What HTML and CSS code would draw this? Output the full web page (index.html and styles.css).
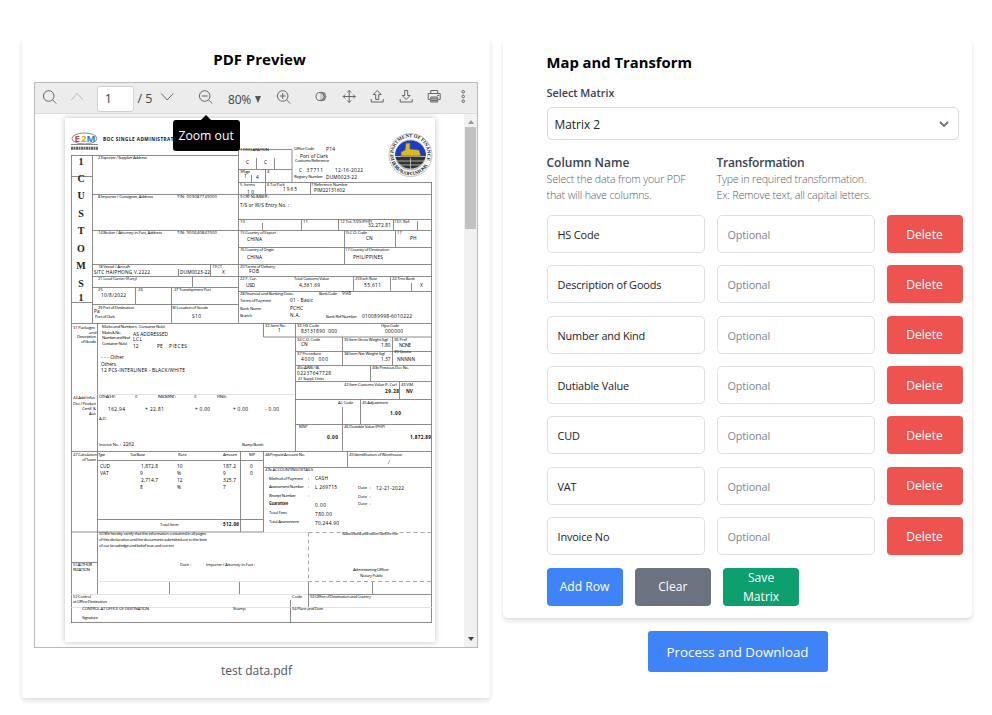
FILE: index.html
```html
<!DOCTYPE html>
<html lang="en">
<head>
<meta charset="utf-8">
<title>PDF Mapping</title>
<link rel="stylesheet" href="styles.css">
</head>
<body>
<main class="layout">
<section class="card preview">
<h2 class="preview-title">PDF Preview</h2>
<div class="viewer">
<div class="toolbar">
<svg class="ico" viewBox="0 0 28 30"><circle cx="13.5" cy="13" r="5.3"/><path d="M17.5 17l3.500 3.500"/></svg>
<svg class="ico muted" viewBox="0 0 28 30"><path d="M8 17l6-6.500 6 6.500"/></svg>
<span class="page-input">1</span>
<span class="page-total">/ 5</span>
<svg class="ico" viewBox="0 0 28 30"><path d="M8 10.500l6 6.500 6-6.500"/></svg>
<span class="zoom-out">
<svg class="ico" viewBox="0 0 28 30"><circle cx="13.500" cy="13" r="5.300"/><path d="M17.500 17l3.500 3.500M10.500 13h6"/></svg>
<span class="tip">Zoom out</span>
</span>
<span class="zoom">80%<i class="tri"></i></span>
<svg class="ico zoom-in" viewBox="0 0 28 30"><circle cx="13.500" cy="13" r="5.300"/><path d="M17.500 17l3.500 3.500M10.500 13h6M13.500 10v6"/></svg>
<svg class="ico theme" viewBox="0 0 28 30"><path d="M14 9l1.500.8 2 .2.300 2 1 1.500-1 1.500-.3 2-2 .2-1.500.8z" fill="#aaa"/><circle cx="12.800" cy="13.500" r="4"/><path d="M13 9.500a4 4 0 0 1 0 8" fill="#ccc"/></svg>
<svg class="ico" viewBox="0 0 28 30"><path d="M14 7.500v12M8 13.500h12M12 9.500l2-2 2 2M12 17.500l2 2 2-2M10 11.500l-2 2 2 2M18 11.500l2 2-2 2"/></svg>
<svg class="ico" viewBox="0 0 28 30"><path d="M8 16v3h12v-3M12.500 16.500v-5h-2.500l4-4 4 4h-2.500v5z"/></svg>
<svg class="ico" viewBox="0 0 28 30"><path d="M8 16v3h12v-3M12.500 7.500v5h-2.500l4 4 4-4h-2.500v-5z"/></svg>
<svg class="ico" viewBox="0 0 28 30"><path d="M10.500 10.500v-3h7v3M10 16.500H8v-6h12v6h-2"/><path d="M10.500 14h7v5h-7zM11 15.800h6M11 17.500h6M17 12.500h2" fill="#ccc"/></svg>
<svg class="ico" viewBox="0 0 28 30"><circle cx="14" cy="8.800" r="1.300"/><circle cx="14" cy="13.500" r="1.300"/><circle cx="14" cy="18.200" r="1.300"/></svg>
</div>
<div class="stage">
<div class="sheet">
<svg class="doc" viewBox="65 118 370 524">
<g class="rules">
<path d="M71.500 155V623M92.500 155V323M238.500 149V323M431.500 182V623M97.500 323V594M71 155.500H238M71 176.500H92M92 194.500H432M92 230.500H238M238 149.500H292V182M256.500 158V169M274.500 158V169M238 169.500H292M265.500 169V194M238 182.500H432M251.500 175V182M310.500 182V194M238 219.500H432M262.500 223V230M301.500 219V230M338.500 219V230M393.500 219V230M417.500 221V230M238 230.500H432M344.500 230V264M395.500 230V247M238 247.500H432M92 264.500H432M92 276.500H432M92 287.500H238M238 291.500H432M92 304.500H238M71 302.500H92M71 323.500H432M178.500 269V276M210.500 264V276M192.500 276V287M135.500 287V304M171.500 287V323M353.500 276V291M390.500 276V291M411.500 283V291M263.500 323V337H432M295.500 323V451M295 351.500H432M295 365.500H432M342.500 337V365M392.500 337V365M370.500 365V381M295 381.500H432M399.500 381V399M295 399.500H432M360.500 399V424M342.500 407V451M295 424.500H432M71 451.500H432M97 460.500H263M240.500 451V532M263.500 451V532H71M347.500 451V467M263 467.500H432M97 519.500H263M71 562.500H97M169.500 582V594M239.500 582V594M308.500 582V607M372.500 582V594M308 594.500H432M290.500 600V623M71 622.500H432"/>
<path class="faint" d="M97 394.500H295M263 532.500H308M97 581.500H308M71 594.500H308M71 607.500H432"/>
<path class="dash" d="M308.500 532.500H432M308.500 532.500V582M308 581.500H432"/>
</g>
<g class="side"><text x="81" y="165">1</text><text x="81" y="182">C</text><text x="81" y="199">U</text><text x="81" y="216.500">S</text><text x="81" y="234">T</text><text x="81" y="251.500">O</text><text x="81" y="269">M</text><text x="81" y="287">S</text><text x="81" y="301">1</text></g>
<text class="b" x="103" y="141" textLength="79">BOC SINGLE ADMINISTRATIVE</text>
<g class="s">
<text x="98" y="158.500" textLength="49">2 Exporter / Supplier Address</text>
<text x="98" y="198" textLength="55">8 Importer / Consignee, Address</text><text x="177" y="198" textLength="40">TIN: 009087749000</text>
<text x="98" y="234" textLength="64">14 Broker / Attorney-in-Fact, Address</text><text x="177" y="234" textLength="40">TIN: 900640847000</text>
<text x="240" y="151" textLength="29">1 DECLARATION</text><text x="294" y="150" textLength="20">Office Code</text><text x="295" y="162" textLength="34">Customs Reference</text><text x="294" y="178" textLength="29">Registry Number</text>
<text x="240" y="173" textLength="10">3 Page</text><text x="267" y="173">4</text><text x="240" y="185.500" textLength="15">5 Items</text><text x="267" y="185.500" textLength="18">6 Tot Pack</text><text x="311" y="185.500" textLength="37">7 Reference Number</text>
<text x="240" y="198" textLength="29">9 CRF NUMBER :</text><text x="240" y="223">10</text><text x="303" y="223">11</text><text x="340" y="223" textLength="32">12 Tot. T/I/S (PHP)</text><text x="394" y="223" textLength="16">13 F. Ref.</text>
<text x="240" y="234" textLength="36">15 Country of Export</text><text x="345" y="234" textLength="22">15 C.O. Code</text><text x="397" y="234">17</text><text x="240" y="251" textLength="34">16 Country of Origin</text><text x="345" y="251" textLength="44">17 Country of Destination</text>
<text x="98" y="267.500" textLength="32">18 Vessel / Aircraft</text><text x="212" y="267.500" textLength="10">19 CT</text><text x="240" y="267.500" textLength="35">20 Terms of Delivery</text>
<text x="98" y="280" textLength="39">21 Local Carrier (If any)</text><text x="240" y="280" textLength="17">22 F. Cur.</text><text x="294" y="280" textLength="35">Total Customs Value</text><text x="355" y="280" textLength="22">23 Exch Rate</text><text x="392" y="280" textLength="23">24 Trns Bank</text>
<text x="98" y="291">25</text><text x="138" y="291">26</text><text x="174" y="291" textLength="37">27 Transhipment Port</text><text x="240" y="295" textLength="54">28 Financial and Banking Data:-</text><text x="319" y="295" textLength="18">Bank Code</text>
<text x="240" y="302" textLength="31">Terms of Payment</text><text x="240" y="309.500" textLength="21">Bank Name</text><text x="240" y="317" textLength="12">Branch</text><text x="326" y="318" textLength="31">Bank Ref Number</text>
<text x="98" y="309" textLength="36">29 Port of Destination</text><text x="95" y="317.500" textLength="20">Port of Clark</text><text x="172" y="309" textLength="36">30 Location of Goods</text>
<text x="73" y="328.500" textLength="22">31 Packages</text><text x="89" y="333.500">and</text><text x="77" y="338" textLength="19">Description</text><text x="81" y="343" textLength="15">of Goods</text>
<text x="102" y="327.500" textLength="63">Marks and Numbers - Container No(s)</text><text x="102" y="334" textLength="19">Marks &amp; No.</text><text x="102" y="338.800" textLength="28">Number and Kind</text><text x="102" y="345" textLength="25">Container No(s)</text>
<text x="265" y="327" textLength="21">32 Item No.</text><text x="297" y="327" textLength="22">33 HS Code</text><text x="381" y="327" textLength="18">Hijos Code</text><text x="297" y="341" textLength="23">34 C.O. Code</text><text x="344" y="341" textLength="44">35 Item Gross Weight (kg)</text><text x="394" y="341" textLength="13">36 Pref</text><text x="297" y="355" textLength="24">37 Procedure</text><text x="344" y="355" textLength="41">38 Item Net Weight (kg)</text><text x="394" y="353" textLength="17">39 Quota</text><text x="297" y="369" textLength="23">40a AWB / BL</text><text x="372" y="369" textLength="37">40b Previous Doc No.</text><text x="298" y="380" textLength="26">41 Suppl. Units</text><text x="344" y="385.500" textLength="53">42 Item Customs Value (F. Cur)</text><text x="401" y="385.500" textLength="13">43 V.M.</text><text x="338" y="404" textLength="15">A.I. Code</text><text x="362" y="404" textLength="26">45 Adjustment</text><text x="299" y="428">MSP</text><text x="344" y="428" textLength="41">46 Dutiable Value (PHP)</text>
<text x="73" y="399" textLength="22">44 Add Infos</text><text x="73" y="404.500" textLength="23">Doc / Product</text><text x="82" y="410" textLength="14">Certif. &amp;</text><text x="89" y="415">Aut</text>
<text x="99" y="398" textLength="17">OTHACHY :</text><text x="135" y="398">0</text><text x="158" y="398" textLength="18">INSCMYNT :</text><text x="194" y="398">0</text><text x="217" y="398" textLength="10">FING :</text><text x="99" y="420">A.D.</text><text x="99" y="446" textLength="22">Invoice No. :</text><text x="242" y="446" textLength="22">Bump Bond :</text>
<text x="73" y="455.500" textLength="24">47 Calculation</text><text x="82" y="461" textLength="14">of Taxes</text><text x="98" y="456" textLength="7">Type</text><text x="130" y="456" textLength="15">Tax Base</text><text x="178" y="456">Rate</text><text x="223" y="456" textLength="14">Amount</text><text x="249" y="456">MP</text><text x="265" y="456" textLength="40">48 Prepaid Account No.</text><text x="349" y="456" textLength="53">49 Identification of Warehouse</text><text x="265" y="471" textLength="48">47b ACCOUNTING DETAILS</text>
<text x="269" y="480" textLength="34">Method of Payment</text><text x="308" y="480">:</text><text x="269" y="488" textLength="35">Assessment Number</text><text x="308" y="488">:</text><text x="269" y="497" textLength="27">Receipt Number</text><text x="308" y="497">:</text><text class="b" x="269" y="505" textLength="19" lengthAdjust="spacingAndGlyphs">Guarantee</text><text x="269" y="514" textLength="18">Total Fees</text><text x="269" y="523" textLength="30">Total Assessment</text><text x="358" y="489">Date&#160; :</text><text x="358" y="497.500">Date&#160; :</text><text x="358" y="505">Date&#160; :</text><text x="160" y="526" textLength="19">Total Item:</text>
<text x="99" y="535" textLength="107">50 We hereby certify that the information contained in all pages</text><text x="99" y="541" textLength="108">of this declaration and the documents submitted are to the best</text><text x="99" y="546.500" textLength="75">of our knowledge and belief true and correct</text><text x="73" y="566" textLength="19">51 AUTHOR</text><text x="73" y="571" textLength="17">RIZATION</text><text x="180" y="566">Date :</text><text x="206" y="566" textLength="49">Importer / Attorney-in-Fact :</text><text x="342" y="535" textLength="56">Subscribed and sworn before me</text><text x="353" y="571" textLength="36">Administering Officer</text><text x="360" y="576.500" textLength="23">Notary Public</text>
<text x="73" y="597.500" textLength="18">52 Control</text><text x="73" y="603" textLength="34">at Office Destination</text><text x="82" y="610" textLength="67">CONTROL AT OFFICE OF DESTINATION</text><text x="82" y="619" textLength="16">Signature</text><text x="233" y="610">Stamp</text><text x="292" y="597.500">Code</text><text x="310" y="597.500" textLength="61">53 Office of Destination and Country</text><text x="292" y="610" textLength="31">54 Place and Date</text>
</g>
<g class="v">
<text x="246" y="163.500">C</text><text x="264" y="163.500">C</text><text x="326" y="150.500" textLength="9">P14</text><text x="300" y="157.500" textLength="28">Port of Clark</text><text x="299" y="171.500" textLength="24">C&#160; 37711</text><text x="335" y="171.500" textLength="28">12-16-2022</text><text x="326" y="179" textLength="31">DUM0023-22</text><text x="244" y="178">1</text><text x="256" y="179">4</text><text x="247" y="194" textLength="7">10</text><text x="283" y="190.500" textLength="14">1965</text><text x="314" y="191.500" textLength="31">PIM22131602</text><text x="240" y="207" textLength="49">T/S or W/S Entry No. :</text><text x="368" y="227" textLength="23">32,272.81</text><text x="247" y="241" textLength="15">CHINA</text><text x="366" y="240">CN</text><text x="410" y="240">PH</text><text x="247" y="259" textLength="15">CHINA</text><text x="353" y="259" textLength="30">PHILIPPINES</text><text x="249" y="273" textLength="10">FOB</text>
<text x="94" y="274" textLength="56">SITC HAIPHONG V.2222</text><text x="180" y="274" textLength="30">DUM0023-22</text><text x="222" y="274">X</text><text x="246" y="287" textLength="9">USD</text><text x="299" y="287" textLength="21">4,361.69</text><text x="364" y="287" textLength="17">55.611</text><text x="420" y="287">X</text><text x="101" y="297" textLength="25">10/8/2022</text><text x="342" y="295" textLength="9">998</text><text x="290" y="302" textLength="23">01 - Basic</text><text x="290" y="310" textLength="13">PCHC</text><text x="290" y="317" textLength="10">N.A.</text><text x="362" y="318" textLength="50">010089998-6010222</text><text x="94" y="312.800">Pa</text><text x="192" y="318" textLength="9">S10</text><text x="133" y="336" textLength="35">AS ADDRESSED</text><text x="133" y="341" textLength="9">LCL</text><text x="133" y="348">12</text><text x="157" y="348">PE</text><text x="169" y="348" textLength="18">PIECES</text><text x="101" y="359" textLength="23">- - - Other</text><text x="101" y="366" textLength="15">Others</text><text x="101" y="371.500" textLength="84">12 PCS-INTERLINER - BLACK/WHITE</text>
<text x="278" y="332">1</text><text x="301" y="332.500" textLength="36">83131890&#160; 000</text><text x="385" y="332.500" textLength="18">000000</text><text x="301" y="346">CN</text><text x="381" y="347">1.80</text><text x="399" y="347" textLength="12">NONE</text><text x="301" y="361" textLength="27">4000&#160; 000</text><text x="381" y="361">1.37</text><text x="397" y="361" textLength="18">NNNNN</text><text x="297" y="375" textLength="34">02237647728</text><text class="b" x="385" y="393" textLength="14">29.28</text><text class="b" x="406" y="393">NV</text><text class="b" x="390" y="415" textLength="11">1.00</text><text class="b" x="327" y="439" textLength="11">0.00</text><text class="b" x="410" y="439" textLength="21">1,872.89</text>
<text x="108" y="410.500" textLength="17">162.94</text><text x="145" y="410.500" textLength="19">+ 22.81</text><text x="195" y="410.500" textLength="15">+ 0.00</text><text x="233" y="410.500" textLength="15">+ 0.00</text><text x="265" y="410.500" textLength="14">- 0.00</text><text x="123" y="446" textLength="11">2262</text><text x="100" y="468" textLength="10">CUD</text><text x="100" y="475">VAT</text><text x="141" y="468" textLength="17">1,872.8</text><text x="140" y="475">9</text><text x="141" y="482" textLength="17">2,714.7</text><text x="140" y="489">8</text><text x="177" y="468">10</text><text x="177" y="475">%</text><text x="177" y="482">12</text><text x="177" y="489">%</text><text x="223" y="468" textLength="13">187.2</text><text x="223" y="475">9</text><text x="223" y="482" textLength="13">325.7</text><text x="223" y="489">7</text><text x="250" y="468">0</text><text x="250" y="475">0</text><text x="388" y="464">/</text><text x="315" y="480" textLength="13">CASH</text><text x="315" y="489" textLength="22">L 269715</text><text x="376" y="490" textLength="28">12-21-2022</text><text x="315" y="507" textLength="11">0.00</text><text x="315" y="516" textLength="17">780.00</text><text x="315" y="524.500" textLength="24">70,244.90</text><text class="b" x="223" y="526" textLength="16">512.06</text>
</g>
<g class="emblem">
<ellipse cx="84.500" cy="138.500" rx="12.500" ry="5.500"/><path d="M71 144.500H98"/><text x="74.500" y="142" fill="#c64a45">E</text><text x="81" y="142" fill="#d5a636">2</text><text x="86.500" y="142" fill="#367db4">M</text><path class="caption" d="M71 148.300H98"/>
</g>
<g class="seal">
<circle cx="410.500" cy="155" r="21.500" fill="#fff" stroke="#aaa"/><circle cx="410.500" cy="155" r="15.500" fill="#bbb"/><path d="M395 156a15.500 15.500 0 0 1 31 0z" fill="#183bd0"/><path d="M401 156v-4l4-2 1-7h4v6l9 1 2 6z" fill="#d8bb20" stroke="#68601f"/><path d="M395.500 157H425.500a15.500 15.500 0 0 1-30 0z" fill="#333"/><path d="M395 161H426M397 165H424M410.500 158V170" stroke="#ddd" fill="none"/>
<path id="seal-top" d="M394.500 160a17 17 0 1 1 32 0" fill="none"/><path id="seal-bottom" d="M391.500 162a20.300 20.300 0 0 0 38 0" fill="none"/>
<text><textPath href="#seal-top" textLength="65">DEPARTMENT OF FINANCE</textPath></text><text><textPath href="#seal-bottom" textLength="45">BUREAU OF CUSTOMS</textPath></text>
</g>
</svg>
</div>
<div class="scrollbar"><i class="arrow up"></i><i class="thumb"></i><i class="arrow down"></i></div>
</div>
</div>
<p class="filename">test data.pdf</p>
</section>
<div class="right">
<section class="card mapping">
<h2 class="map-title">Map and Transform</h2>
<div class="label">Select Matrix</div>
<div class="select"><span>Matrix 2</span><svg class="chev" viewBox="0 0 12 8"><path d="M2 2l4 4 4-4"/></svg></div>
<div class="grid heads">
<div><h3>Column Name</h3><p>Select the data from your PDF<br>that will have columns.</p></div>
<div><h3 class="h-trans">Transformation</h3><p class="p-trans">Type in required transformation.<br>Ex: Remove text, all capital letters.</p></div>
</div>
<div class="rows">
<div class="grid"><div class="field">HS Code</div><div class="field opt">Optional</div><div class="btn red">Delete</div></div>
<div class="grid"><div class="field">Description of Goods</div><div class="field opt">Optional</div><div class="btn red">Delete</div></div>
<div class="grid"><div class="field">Number and Kind</div><div class="field opt">Optional</div><div class="btn red">Delete</div></div>
<div class="grid"><div class="field">Dutiable Value</div><div class="field opt">Optional</div><div class="btn red">Delete</div></div>
<div class="grid"><div class="field">CUD</div><div class="field opt">Optional</div><div class="btn red">Delete</div></div>
<div class="grid"><div class="field">VAT</div><div class="field opt">Optional</div><div class="btn red">Delete</div></div>
<div class="grid"><div class="field">Invoice No</div><div class="field opt">Optional</div><div class="btn red">Delete</div></div>
</div>
<div class="actions"><div class="btn blue">Add Row</div><div class="btn gray">Clear</div><div class="btn green">Save<br>Matrix</div></div>
</section>
<div class="process">Process and Download</div>
</div>
</main>
</body>
</html>
```
FILE: styles.css
```css
* { box-sizing: border-box; }
body { margin: 0; background: #fff; font-family: "Open Sans", "Noto Sans", sans-serif; color: #374151; overflow: hidden; }
h2, h3, p { margin: 0; }
.layout { display: flex; align-items: flex-start; gap: 13px; padding: 38px 20px 0 22px; height: 715px; }
.card { background: #fff; border-radius: 5px; box-shadow: 0 3px 5px rgba(0,0,0,.11), 0 1px 2px rgba(0,0,0,.04); }
.preview { width: 469px; height: 660px; padding: 0 12px; border-radius: 2px; }
.preview-title { height: 44px; padding: 9px 0 0 7px; font-size: 15px; line-height: 24px; text-align: center; font-weight: 700; color: #000; }
.viewer { width: 444px; height: 566px; border: 1px solid #b9b9b9; display: flex; flex-direction: column; }
.toolbar { height: 31px; flex: none; background: #ececec; border-bottom: 1px solid #ddd; display: flex; align-items: flex-start; color: #444; }
.ico { width: 28.400px; height: 30px; flex: none; fill: none; stroke: #666; stroke-width: 1; }
.ico.muted { stroke: #bbb; }
.page-input { width: 38px; height: 26px; margin: 3px 0 0 5px; border: 1px solid #d2d2d2; border-radius: 3px; background: #fff; padding-left: 7px; font-size: 12.500px; line-height: 24px; }
.page-total { width: 19px; padding-left: 3px; font-size: 12.500px; line-height: 32px; white-space: nowrap; }
.zoom-out { position: relative; display: flex; margin-left: 9px; }
.tip { position: absolute; left: -18px; top: 37px; width: 67px; height: 31px; border-radius: 3px; background: #000; color: #fff; font-size: 12.200px; line-height: 31px; text-align: center; white-space: nowrap; z-index: 2; }
.tip::before { content: ""; position: absolute; left: 28px; top: -5px; border: 5px solid transparent; border-top: 0; border-bottom-color: #000; }
.zoom { display: flex; align-items: center; width: 43px; height: 32px; padding-left: 9px; font-size: 12px; letter-spacing: -.2px; }
.tri { flex: none; margin-left: 4px; border: 3.500px solid transparent; border-top: 7px solid #555; border-bottom: 0; }
.zoom-in { margin-left: 7px; }
.theme { margin-left: 9.700px; }
.stage { flex: 1; display: flex; justify-content: space-between; padding-left: 30px; background: #fff; }
.sheet { width: 370px; height: 524px; margin-top: 4px; box-shadow: 0 0 6px rgba(0,0,0,.25); }
.doc { display: block; width: 370px; height: 524px; font-family: "Open Sans", sans-serif; }
.rules { fill: none; stroke: #777; stroke-width: .85; }
.faint { stroke: #ddd; }
.dash { stroke: #999; stroke-dasharray: 4 3; }
.side { font: 700 10px "Liberation Serif", serif; fill: #222; text-anchor: middle; }
.s { font-size: 4.200px; font-weight: 500; fill: #000; }
.v { font-size: 4.800px; font-weight: 500; fill: #000; }
.b { font-size: 4.700px; font-weight: 700; fill: #111; }
.emblem { fill: none; stroke: #888; }
.emblem text { stroke: none; font-size: 9.500px; font-weight: 700; }
.emblem .caption { stroke: #666; stroke-width: 3; stroke-dasharray: 2 .5; }
.seal { stroke-width: .7; }
.seal text { font: 700 5px "Liberation Serif", serif; fill: #222; }
.scrollbar { width: 13px; background: #f1f1f1; display: flex; flex-direction: column; align-items: center; padding: 6px 0; }
.arrow { border: 3px solid transparent; }
.arrow.up { border-top: 0; border-bottom: 4px solid #999; }
.arrow.down { margin-top: auto; border-bottom: 0; border-top: 4px solid #444; }
.thumb { width: 11px; height: 102px; margin-top: 3px; background: #c1c1c1; }
.filename { padding: 12px 0 0 1px; text-align: center; font-size: 12px; line-height: 22px; color: #4b5563; }
.right { width: 469px; display: flex; flex-direction: column; align-items: center; }
.mapping { width: 469px; height: 580px; padding: 12px 8.500px 0 43.500px; }
.map-title { font-size: 14.800px; line-height: 24px; font-weight: 700; color: #000; }
.label { margin-top: 9px; font-size: 10.800px; line-height: 20px; font-weight: 600; }
.select { width: 412px; height: 33px; margin-top: 4px; border: 1px solid #d5d8dd; border-radius: 5px; display: flex; align-items: center; justify-content: space-between; padding: 0 8px 0 7px; font-size: 11.900px; color: #222; }
.chev { width: 12px; height: 8px; fill: none; stroke: #6b7280; stroke-width: 1.800; }
.grid { display: grid; grid-template-columns: 158px 158px 76px; column-gap: 12px; }
.heads { margin-top: 14px; height: 61px; white-space: nowrap; }
.heads h3 { font-size: 12px; line-height: 18px; font-weight: 600; }
.heads .h-trans { letter-spacing: -.2px; }
.heads p { font-size: 10.700px; line-height: 15.700px; font-weight: 300; color: #555d6b; letter-spacing: -.15px; }
.heads .p-trans { letter-spacing: -.19px; }
.rows { display: grid; gap: 12.350px; }
.field { height: 38px; border: 1px solid #dcdfe4; border-radius: 5px; padding: 1px 0 0 10px; font-size: 10.900px; letter-spacing: -.16px; line-height: 36px; color: #222; white-space: nowrap; }
.opt { color: #7d8591; }
.btn { width: 76px; height: 38px; border-radius: 4px; display: flex; align-items: center; justify-content: center; text-align: center; font-size: 12.100px; line-height: 19px; color: #fff; }
.red { background: #ef5350; }
.blue { background: #3f83f8; }
.gray { background: #6b7280; }
.green { background: #0e9f6e; }
.actions { display: flex; gap: 12.300px; margin-top: 12.500px; }
.process { width: 180px; height: 41px; margin-top: 13px; border-radius: 3px; background: #3f83f8; color: #fff; font-size: 13.350px; line-height: 42px; text-align: center; white-space: nowrap; }
```
